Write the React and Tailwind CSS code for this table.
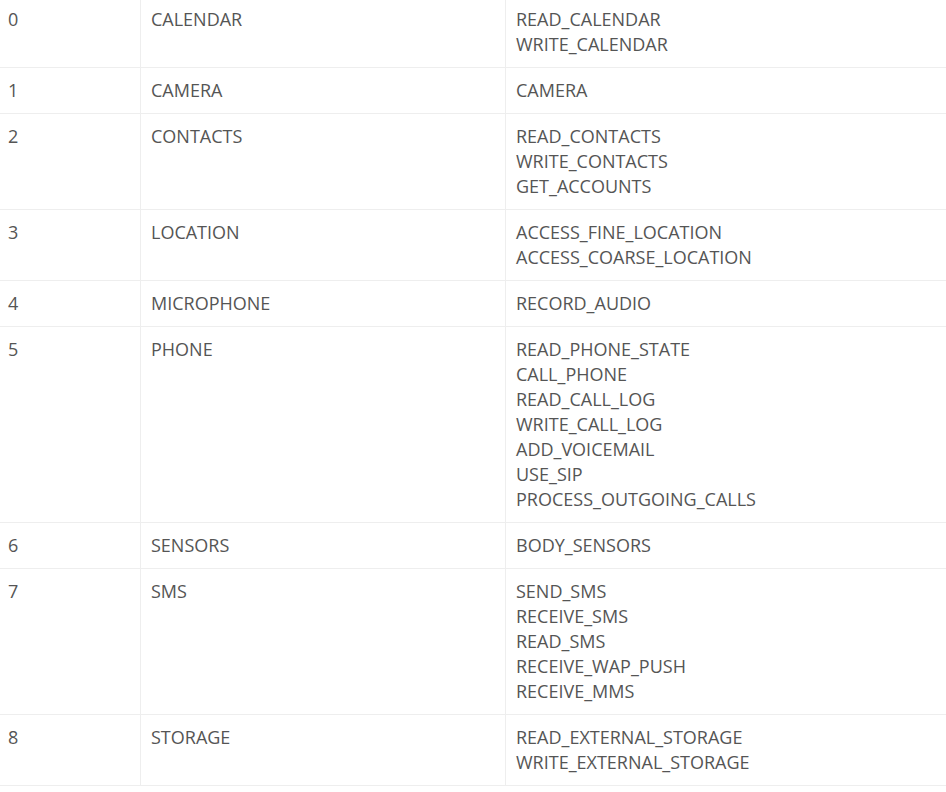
const rows = [
  ["0", "CALENDAR", ["READ_CALENDAR", "WRITE_CALENDAR"]],
  ["1", "CAMERA", ["CAMERA"]],
  ["2", "CONTACTS", ["READ_CONTACTS", "WRITE_CONTACTS", "GET_ACCOUNTS"]],
  ["3", "LOCATION", ["ACCESS_FINE_LOCATION", "ACCESS_COARSE_LOCATION"]],
  ["4", "MICROPHONE", ["RECORD_AUDIO"]],
  ["5", "PHONE", ["READ_PHONE_STATE", "CALL_PHONE", "READ_CALL_LOG", "WRITE_CALL_LOG", "ADD_VOICEMAIL", "USE_SIP", "PROCESS_OUTGOING_CALLS"]],
  ["6", "SENSORS", ["BODY_SENSORS"]],
  ["7", "SMS", ["SEND_SMS", "RECEIVE_SMS", "READ_SMS", "RECEIVE_WAP_PUSH", "RECEIVE_MMS"]],
  ["8", "STORAGE", ["READ_EXTERNAL_STORAGE", "WRITE_EXTERNAL_STORAGE"]],
];

export default function App() {
  return (
    <div className="min-h-screen bg-white overflow-hidden" style={{ fontFamily: '"Open Sans", "Noto Sans", sans-serif' }}>
      <div className="-mt-[3px] text-[18px] leading-[25px] text-[#555]">
        {rows.map(([id, group, perms]) => (
          <div key={id} className="grid grid-cols-[140px_365px_1fr] border-b border-[#eee]">
            <div className="pl-[8px] pr-[10px] py-[10px]">{id}</div>
            <div className="border-l border-[#eee] px-[10px] py-[10px]">{group}</div>
            <div className="border-l border-[#eee] px-[10px] py-[10px]">
              {perms.map((p) => (
                <div key={p}>{p}</div>
              ))}
            </div>
          </div>
        ))}
      </div>
    </div>
  );
}
